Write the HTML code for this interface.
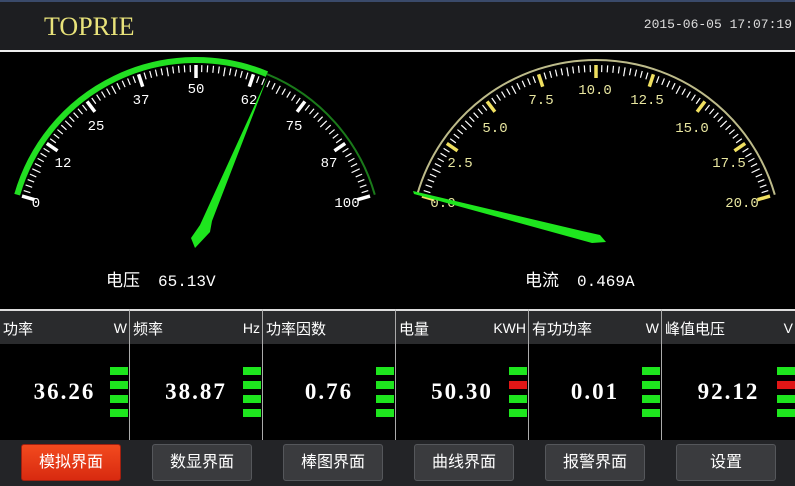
<!DOCTYPE html>
<html><head><meta charset="utf-8"><style>
*{margin:0;padding:0;box-sizing:border-box}
body{width:795px;height:486px;background:#000;position:relative;overflow:hidden;font-family:"Liberation Sans","Noto Sans CJK SC",sans-serif}
#hdr{position:absolute;left:0;top:0;width:795px;height:50px;background:#1d1e21;border-top:2px solid #3a4a6a}
#hdr .t{position:absolute;left:44px;top:10px;font-family:"Liberation Serif",serif;font-size:26px;color:#e8e27a}
#hdr .d{position:absolute;right:3px;top:15px;font-family:"Liberation Mono",monospace;font-size:13px;color:#ddd}
#hl{position:absolute;left:0;top:50px;width:795px;height:2px;background:#eee}
.pl{position:absolute;top:309px;height:131px;border-top:2px solid #ddd;border-right:1px solid #aaa}
.ph{height:33px;background:#2a2b2d;color:#fff;font-size:15px;padding:7px 0 0 3px;position:relative}
.ph span{position:absolute;right:2px;top:9px;font-size:14px}
.v{position:absolute;top:68px;width:100%;text-align:center;font-family:"Liberation Serif","Noto Serif CJK SC",serif;font-weight:bold;font-size:23px;color:#fff;letter-spacing:2px}
.b{position:absolute;right:1px;width:18px;height:8px;background:#1ee61e}
.r{background:#e01616}
#bot{position:absolute;left:0;top:440px;width:795px;height:46px;background:#232427}
.btn{position:absolute;top:4px;width:100px;height:37px;border-radius:3px;background:#3a3b3e;border:1px solid #55575b;color:#fff;font-size:16px;text-align:center;line-height:35px}
.red{background:linear-gradient(#f24a1e,#d82a10);border-color:#a02010}
.lab{position:absolute;color:#fff;font-size:17px}
.lab i{font-style:normal;font-family:"Liberation Mono",monospace;font-size:16px;margin-left:18px}
</style></head><body>
<div id="hdr"><div class="t">TOPRIE</div><div class="d">2015-06-05 17:07:19</div></div>
<div id="hl"></div>
<svg id="g" width="795" height="486" style="position:absolute;left:0;top:0" font-family="Liberation Mono, monospace" font-size="14">
<g id="t1"></g><g id="t2"></g>
<path d="M 17.2 194.7 A 186 186 0 0 1 266.9 74.1" stroke="#22e022" stroke-width="6" fill="none"/>
<path d="M 266.9 74.1 A 186 186 0 0 1 374.8 194.7" stroke="#1a7a1a" stroke-width="2" fill="none"/>
<path d="M 417.2 194.7 A 186 186 0 0 1 774.8 194.7" stroke="#bdbb8a" stroke-width="2" fill="none"/>
<g fill="#fff" text-anchor="middle">
<text x="36" y="207">0</text><text x="63" y="167">12</text><text x="96" y="130">25</text><text x="141" y="104">37</text><text x="196" y="93">50</text><text x="249" y="104">62</text><text x="294" y="130">75</text><text x="329" y="167">87</text><text x="347" y="207">100</text>
</g>
<g fill="#e8e6a0" text-anchor="middle">
<text x="443" y="207">0.0</text><text x="460" y="167">2.5</text><text x="495" y="132">5.0</text><text x="541" y="104">7.5</text><text x="595" y="94">10.0</text><text x="647" y="104">12.5</text><text x="692" y="132">15.0</text><text x="729" y="167">17.5</text><text x="742" y="207">20.0</text>
</g>
<polygon points="268,76 212,221 210,232 195,248 191,238 200,225" fill="#1ee61e"/>
<polygon points="413,191 414,194 592,243 606,242 600,235 582,231" fill="#1ee61e"/>
</svg>
<div class="lab" style="left:106px;top:266px">电压<i>65.13V</i></div>
<div class="lab" style="left:525px;top:266px">电流<i>0.469A</i></div>

<div class="pl" style="left:0;width:130px"><div class="ph">功率<span>W</span></div><div class="v">36.26</div><div class="b" style="top:56px"></div><div class="b" style="top:70px"></div><div class="b" style="top:84px"></div><div class="b" style="top:98px"></div></div>
<div class="pl" style="left:130px;width:133px"><div class="ph">频率<span>Hz</span></div><div class="v">38.87</div><div class="b" style="top:56px"></div><div class="b" style="top:70px"></div><div class="b" style="top:84px"></div><div class="b" style="top:98px"></div></div>
<div class="pl" style="left:263px;width:133px"><div class="ph">功率因数<span></span></div><div class="v">0.76</div><div class="b" style="top:56px"></div><div class="b" style="top:70px"></div><div class="b" style="top:84px"></div><div class="b" style="top:98px"></div></div>
<div class="pl" style="left:396px;width:133px"><div class="ph">电量<span>KWH</span></div><div class="v">50.30</div><div class="b" style="top:56px"></div><div class="b r" style="top:70px"></div><div class="b" style="top:84px"></div><div class="b" style="top:98px"></div></div>
<div class="pl" style="left:529px;width:133px"><div class="ph">有功功率<span>W</span></div><div class="v">0.01</div><div class="b" style="top:56px"></div><div class="b" style="top:70px"></div><div class="b" style="top:84px"></div><div class="b" style="top:98px"></div></div>
<div class="pl" style="left:662px;width:133px;border-right:none"><div class="ph">峰值电压<span>V</span></div><div class="v">92.12</div><div class="b" style="top:56px;right:0"></div><div class="b r" style="top:70px;right:0"></div><div class="b" style="top:84px;right:0"></div><div class="b" style="top:98px;right:0"></div></div>

<div id="bot">
<div class="btn red" style="left:21px">模拟界面</div>
<div class="btn" style="left:152px">数显界面</div>
<div class="btn" style="left:283px">棒图界面</div>
<div class="btn" style="left:414px">曲线界面</div>
<div class="btn" style="left:545px">报警界面</div>
<div class="btn" style="left:676px">设置</div>
</div>
<script>
function ticks(id,cx,cy,col,majCol){
 var g=document.getElementById(id),s="";
 for(var i=0;i<=80;i++){
  var a=(164-148*i/80)*Math.PI/180,maj=i%10==0,mid=i%5==0;
  var r1=maj?168:(mid?172:174),r2=181;
  var c=Math.cos(a),sn=Math.sin(a);
  s+='<line x1="'+(cx+r1*c)+'" y1="'+(cy-r1*sn)+'" x2="'+(cx+r2*c)+'" y2="'+(cy-r2*sn)+'" stroke="'+(maj?majCol:col)+'" stroke-width="'+(maj?3.5:1.2)+'"/>';
 }
 g.innerHTML=s;
}
ticks("t1",196,246,"#fff","#fff");
ticks("t2",596,246,"#fff","#f0e060");
</script>
</body></html>
